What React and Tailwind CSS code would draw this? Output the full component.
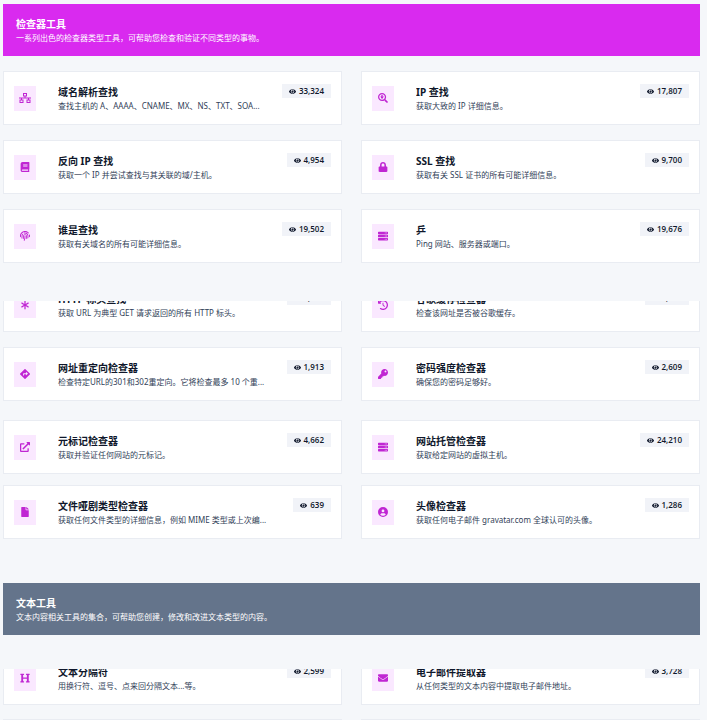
import React from 'react';
import { FaFingerprint, FaAsterisk, FaClockRotateLeft, FaCircleUser } from 'react-icons/fa6';
import {
  FaSearchLocation,
  FaBook,
  FaLock,
  FaServer,
  FaDirections,
  FaKey,
  FaExternalLinkAlt,
  FaFile,
  FaHeading,
  FaEnvelope,
  FaEye
} from 'react-icons/fa';

const NetworkIcon = ({ className }) => (
  <svg viewBox="0 0 12 10" fill="none" stroke="currentColor" className={className}>
    <rect x="4.5" y="0.5" width="3" height="2.5" />
    <path d="M0 5h12M6 3v2M2.5 5v2M9.5 5v2" />
    <rect x="1" y="7" width="3" height="2.5" />
    <rect x="8" y="7" width="3" height="2.5" />
  </svg>
);

const checkerTools = [
  { icon: NetworkIcon, title: '域名解析查找', text: '查找主机的 A、AAAA、CNAME、MX、NS、TXT、SOA...', views: '33,324' },
  { icon: FaSearchLocation, title: 'IP 查找', text: '获取大致的 IP 详细信息。', views: '17,807' },
  { icon: FaBook, title: '反向 IP 查找', text: '获取一个 IP 并尝试查找与其关联的域/主机。', views: '4,954' },
  { icon: FaLock, title: 'SSL 查找', text: '获取有关 SSL 证书的所有可能详细信息。', views: '9,700' },
  { icon: FaFingerprint, title: '谁是查找', text: '获取有关域名的所有可能详细信息。', views: '19,502' },
  { icon: FaServer, title: '乒', text: 'Ping 网站、服务器或端口。', views: '19,676' }
];

const headerTools = [
  { icon: FaAsterisk, title: 'HTTP 标头查找', text: '获取 URL 为典型 GET 请求返回的所有 HTTP 标头。', views: '2,107' },
  { icon: FaClockRotateLeft, title: '谷歌缓存检查器', text: '检查该网址是否被谷歌缓存。', views: '2,107' }
];

const redirectTools = [
  { icon: FaDirections, title: '网址重定向检查器', text: '检查特定URL的301和302重定向。它将检查最多 10 个重...', views: '1,913' },
  { icon: FaKey, title: '密码强度检查器', text: '确保您的密码足够好。', views: '2,609' }
];

const metaTools = [
  { icon: FaExternalLinkAlt, title: '元标记检查器', text: '获取并验证任何网站的元标记。', views: '4,662' },
  { icon: FaServer, title: '网站托管检查器', text: '获取给定网站的虚拟主机。', views: '24,210' }
];

const fileTools = [
  { icon: FaFile, title: '文件哑剧类型检查器', text: '获取任何文件类型的详细信息，例如 MIME 类型或上次编...', views: '639' },
  { icon: FaCircleUser, title: '头像检查器', text: '获取任何电子邮件 gravatar.com 全球认可的头像。', views: '1,286' }
];

const textTools = [
  { icon: FaHeading, title: '文本分隔符', text: '用换行符、逗号、点来回分隔文本...等。', views: '2,599' },
  { icon: FaEnvelope, title: '电子邮件提取器', text: '从任何类型的文本内容中提取电子邮件地址。', views: '3,728' }
];

const Banner = ({ title, text, className }) => (
  <header className={`px-[13px] py-3 text-white ${className}`}>
    <h2 className="text-[10px] leading-4 font-bold">{title}</h2>
    <p className="text-[8px] leading-3">{text}</p>
  </header>
);

const ToolCard = ({ icon: Icon, title, text, views }) => (
  <a href="#" className="flex h-[54px] shrink-0 items-center border border-[#e9ecf2] bg-white px-[10px]">
    <span className="flex h-[25px] w-[22px] shrink-0 items-center justify-center bg-[#fae8ff] text-[#c026d3]">
      <Icon className="h-[10px] w-[12px]" />
    </span>
    <div className="ml-[22px] min-w-0 flex-1">
      <h3 className="truncate text-[10px] leading-4 font-bold text-slate-900">{title}</h3>
      <p className="text-[8px] leading-3 whitespace-nowrap text-slate-700">{text}</p>
    </div>
    <span className="mt-3 flex h-[14px] items-center gap-[3px] self-start bg-[#f1f3f8] px-[7px] font-['Open_Sans','Noto_Sans',sans-serif] text-[8px] font-semibold text-slate-900">
      <FaEye className="h-[7px] w-[7px]" />
      {views}
    </span>
  </a>
);

const ToolGrid = ({ tools, className = '' }) => (
  <div className={`grid grid-cols-2 gap-x-[19px] gap-y-[15px] ${className}`}>
    {tools.map((tool) => (
      <ToolCard key={tool.title} {...tool} />
    ))}
  </div>
);

const ClippedRow = ({ tools, className }) => (
  <div className={`flex flex-col justify-end overflow-hidden ${className}`}>
    <ToolGrid tools={tools} />
  </div>
);

const App = () => (
  <div className="min-h-screen bg-[#f5f7fa] pt-1 pr-[7px] pl-[3px] font-['Noto_Sans','Noto_Sans_CJK_SC',sans-serif]">
    <section>
      <Banner
        title="检查器工具"
        text="一系列出色的检查器类型工具，可帮助您检查和验证不同类型的事物。"
        className="bg-[#d92aef]"
      />
      <ToolGrid tools={checkerTools} className="mt-[15px]" />
      <ClippedRow tools={headerTools} className="mt-[38px] h-[31px]" />
      <ToolGrid tools={redirectTools} className="mt-[15px]" />
      <ToolGrid tools={metaTools} className="mt-[19px]" />
      <ToolGrid tools={fileTools} className="mt-[11px]" />
    </section>

    <section className="mt-11">
      <Banner
        title="文本工具"
        text="文本内容相关工具的集合，可帮助您创建，修改和改进文本类型的内容。"
        className="bg-[#64748b]"
      />
      <ClippedRow tools={textTools} className="mt-[34px] h-9" />
      {/* Top edge of the next row */}
      <div className="mt-[14px] grid grid-cols-2 gap-x-[19px]">
        <div className="border-t border-[#e9ecf2]" />
        <div className="border-t border-[#e9ecf2]" />
      </div>
    </section>
  </div>
);

export default App;
